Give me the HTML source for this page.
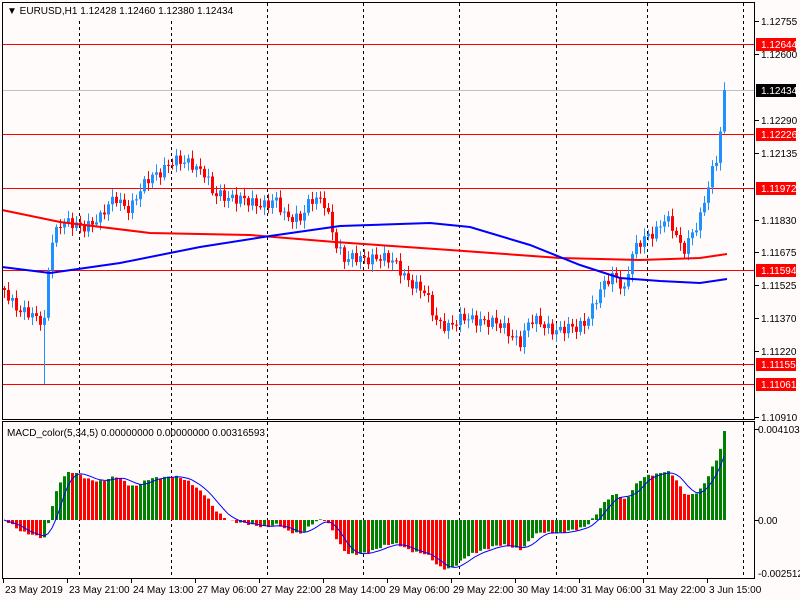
<!DOCTYPE html>
<html><head><meta charset="utf-8"><style>
html,body{margin:0;padding:0;background:#fffbfa;}
svg{display:block;font-family:"Liberation Sans",sans-serif;font-size:10px;}
</style></head><body>
<svg id="s" width="800" height="600" xmlns="http://www.w3.org/2000/svg">
<rect width="800" height="600" fill="#fffbfa"/>
</svg>
<script>
(function(){
var s=document.getElementById('s'),out='';
function L(x1,y1,x2,y2,c,w,d){out+='<line x1="'+x1+'" y1="'+y1+'" x2="'+x2+'" y2="'+y2+'" stroke="'+c+'" stroke-width="'+(w||1)+'"'+(d?' stroke-dasharray="'+d+'"':'')+'/>';}
function R(x,y,w,h,c){out+='<rect x="'+x+'" y="'+y+'" width="'+w+'" height="'+h+'" fill="'+c+'"/>';}
function T(x,y,t,c,a){out+='<text x="'+x+'" y="'+y+'" fill="'+(c||'#000')+'"'+(a?' text-anchor="'+a+'"':'')+'>'+t+'</text>';}
[79,171,267,363,459,556,647,743].forEach(function(x){L(x+.5,3,x+.5,419,'#000',1,'3,3');L(x+.5,422,x+.5,578,'#000',1,'3,3');});
L(3,90.5,754,90.5,'#c0c0c0');
[44,134,188,270,364,384].forEach(function(y){L(3,y+.5,754,y+.5,'#ff0000');});
var K=[[4,290],[20,310],[35,320],[44,320],[50,240],[60,225],[80,225],[100,220],[115,195],[130,210],[150,175],[170,165],[190,160],[205,175],[212,195],[230,195],[250,205],[275,200],[285,220],[300,215],[310,200],[325,205],[335,240],[345,260],[360,260],[375,255],[395,265],[410,280],[425,295],[435,320],[450,325],[465,320],[480,318],[495,325],[505,330],[520,340],[530,322],[545,325],[560,330],[575,330],[585,320],[595,300],[605,285],[615,275],[625,290],[630,255],[640,245],[655,230],[665,215],[675,235],[682,255],[690,235],[700,215],[710,180],[718,155],[724,90],[727,90]];
function interp(x){for(var i=1;i<K.length;i++){if(x<=K[i][0]){var a=K[i-1],b=K[i];return a[1]+(b[1]-a[1])*(x-a[0])/(b[0]-a[0]);}}return K[K.length-1][1];}
var closes=[],prev=288;
for(var i=0;i<181;i++){
 var x=4+4*i;var c=interp(x)+Math.sin(i*2.3)*5+Math.sin(i*0.7)*3;
 if(i==180)c=90;
 var o=prev;var hi=Math.min(o,c)-2-Math.abs(Math.sin(i*1.7))*6,lo=Math.max(o,c)+2+Math.abs(Math.cos(i*1.3))*6;
 if(x==44)lo=384;
 var col=c<o?'#1e90ff':'#ff0000';
 L(x+.5,hi,x+.5,lo,col);
 var bt=Math.min(o,c),bh=Math.max(1,Math.abs(c-o));
 R(x-1,bt,3,bh,col);
 closes.push(c);prev=c;
}
function poly(P,c,w){out+='<polyline fill="none" stroke="'+c+'" stroke-width="'+w+'" points="'+P.map(function(p){return p.join(',')}).join(' ')+'"/>';}
poly([[2,210],[60,222],[150,233],[250,235],[335,242],[450,250],[560,258],[640,260],[700,258],[727,254]],'#ff0000',2);
poly([[2,267],[50,273],[120,263],[200,247],[270,236],[340,226],[430,223],[470,227],[530,245],[580,265],[620,278],[660,281],[700,283],[727,279]],'#0000ff',2);
function pr(y){return 1.12755-(y-21)/21464;}
var e5=pr(closes[0]),e34=e5,m=[],sig=[];
closes.forEach(function(c){var p=pr(c);e5+=(p-e5)*2/6;e34+=(p-e34)*2/35;m.push(e5-e34);});
var mx=Math.max.apply(null,m),sc=89/mx;
for(var i=0;i<m.length;i++){var x=4+4*i,v=m[i]*sc;var col=(i>0&&m[i]<m[i-1])?'#ff0000':'#008000';
 if(v>=0)R(x-1,520-v,3,v,col);else R(x-1,520,3,Math.min(-v,57),col);
 var a=0,n=0;for(var j=Math.max(0,i-4);j<=i;j++){a+=m[j];n++;}sig.push([x,Math.min(577,520-a/n*sc)]);}
poly(sig,'#0000ff',1);
out+='<rect x="2.5" y="2.5" width="752" height="417" fill="none" stroke="#000"/>';
out+='<rect x="2.5" y="421.5" width="752" height="157" fill="none" stroke="#000"/>';
R(3,3,260,16,'#fffbfa');
[[1.12755,21],[1.12600,54],[1.12290,120],[1.12135,153],[1.11830,220],[1.11675,252],[1.11525,285],[1.11370,318],[1.11220,351],[1.10910,417]].forEach(function(p){L(755,p[1]+.5,759,p[1]+.5,'#000');T(761,p[1]+4,p[0].toFixed(5));});
[[1.12644,44],[1.12226,134],[1.11972,188],[1.11594,270],[1.11155,364],[1.11061,384]].forEach(function(p){R(756,p[1]-6,40,13,'#ff0000');T(761,p[1]+4,p[0].toFixed(5),'#fff');});
R(756,84,40,13,'#000');T(761,94,'1.12434','#fff');
T(758,433,'0.0041037');T(758,524,'0.00');T(758,577,'-0.002512');
L(755,429.5,759,429.5,'#000');L(755,520.5,759,520.5,'#000');
[[3,'23 May 2019'],[67,'23 May 21:00'],[131,'24 May 13:00'],[195,'27 May 06:00'],[259,'27 May 22:00'],[323,'28 May 14:00'],[387,'29 May 06:00'],[451,'29 May 22:00'],[515,'30 May 14:00'],[579,'31 May 06:00'],[643,'31 May 22:00'],[707,'3 Jun 15:00']].forEach(function(p){L(p[0]+.5,579,p[0]+.5,583,'#000');T(p[0]+2,593,p[1]);});
T(7,14,'\u25BC EURUSD,H1  1.12428 1.12460 1.12380 1.12434');
T(7,436,'MACD_color(5,34,5) 0.00000000 0.00000000 0.00316593');
s.insertAdjacentHTML('beforeend',out);
})();
</script>
</body></html>
